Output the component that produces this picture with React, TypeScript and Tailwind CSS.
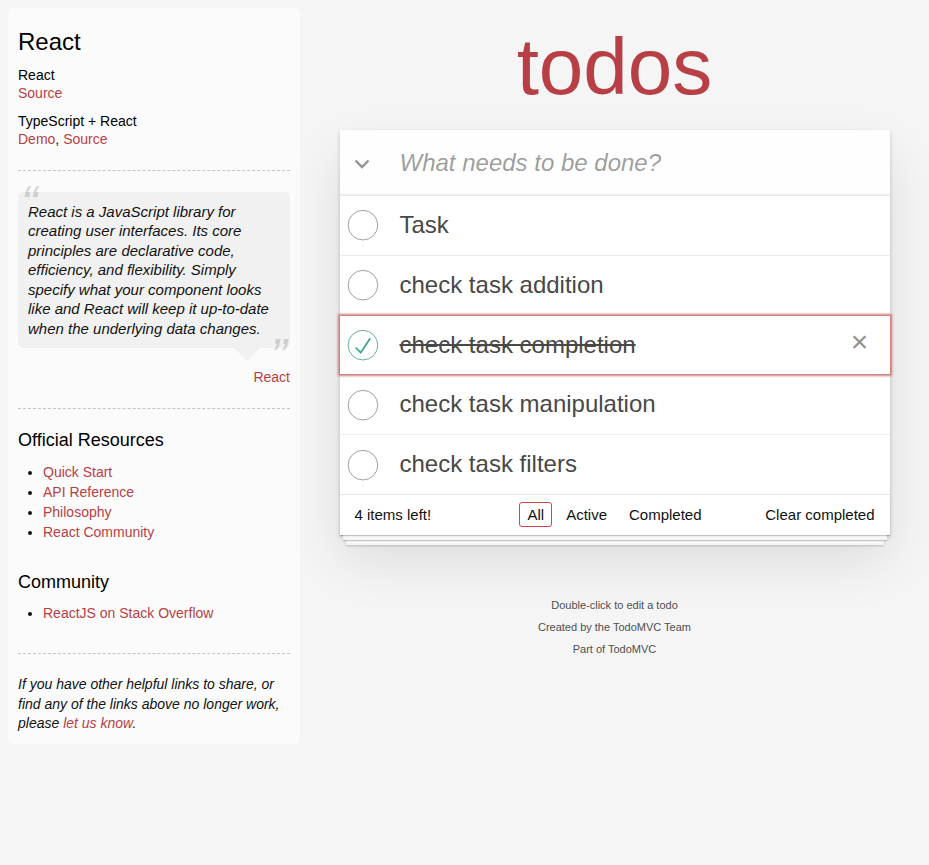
import React from "react";

const todos = [
  { title: "Task", done: false },
  { title: "check task addition", done: false },
  { title: "check task completion", done: true, focused: true },
  { title: "check task manipulation", done: false },
  { title: "check task filters", done: false },
];

function Toggle({ done }: { done: boolean }) {
  return (
    <svg width="40" height="40" viewBox="-10 -18 100 135" className="shrink-0">
      <circle
        cx="50"
        cy="50"
        r="50"
        fill="none"
        stroke={done ? "#59A193" : "#949494"}
        strokeWidth="3"
      />
      {done && <path fill="#3EA390" d="M72 25L42 71 27 56l-4 4 20 20 34-52z" />}
    </svg>
  );
}

function Rule({ className = "" }: { className?: string }) {
  return (
    <div
      className={
        "h-[2px] border-t border-b border-dashed border-t-[#c5c5c5] border-b-[#f7f7f7] " +
        className
      }
    />
  );
}

function Sidebar() {
  return (
    <aside className="ml-2 mt-2 w-[292px] shrink-0 self-start rounded-[5px] bg-white/60 p-[10px] text-[14px] leading-[19.6px] text-[#111]">
      <h3 className="mt-[10px] text-[24px] font-normal leading-[1.2] text-black">React</h3>
      <h5 className="mt-[10px] text-[14px] font-normal leading-[1.2] text-black">React</h5>
      <div>
        <a className="text-[#b83f45]">Source</a>
      </div>
      <h5 className="mt-[10px] text-[14px] font-normal leading-[1.2] text-black">
        TypeScript + React
      </h5>
      <div>
        <a className="text-[#b83f45]">Demo</a>, <a className="text-[#b83f45]">Source</a>
      </div>
      <Rule className="my-5" />
      <blockquote className="relative mb-[60px] rounded-[5px] bg-black/[0.04] p-[10px]">
        <span className="absolute left-[3px] top-[-20px] text-[50px] italic leading-[1.3] opacity-15">
          “
        </span>
        <p className="text-[15px] italic leading-[1.3]">
          React is a JavaScript library for creating user interfaces. Its core principles are
          declarative code, efficiency, and flexibility. Simply specify what your component looks
          like and React will keep it up-to-date when the underlying data changes.
        </p>
        <span className="absolute bottom-[-42px] right-[3px] text-[50px] italic leading-[1.3] opacity-15">
          ”
        </span>
        <span className="absolute right-[30px] top-full h-0 w-0 border-[13px] border-transparent border-t-black/[0.04]" />
        <div className="absolute bottom-[-40px] right-0">
          <a className="ml-[5px] text-[#b83f45]">React</a>
        </div>
      </blockquote>
      <Rule className="mb-5" />
      <h4 className="mb-[10px] text-[18px] font-normal leading-[1.2] text-black">Official Resources</h4>
      <ul className="mb-[30px] ml-[25px] list-disc">
        {["Quick Start", "API Reference", "Philosophy", "React Community"].map((t) => (
          <li key={t} className="leading-[20px]">
            <a className="text-[#b83f45]">{t}</a>
          </li>
        ))}
      </ul>
      <h4 className="mb-[10px] text-[18px] font-normal leading-[1.2] text-black">Community</h4>
      <ul className="mb-[30px] ml-[25px] list-disc">
        <li className="leading-[20px]">
          <a className="text-[#b83f45]">ReactJS on Stack Overflow</a>
        </li>
      </ul>
      <Rule className="mb-5" />
      <p className="text-[14px] italic leading-[19.6px]">
        If you have other helpful links to share, or find any of the links above no longer work,
        please <a className="text-[#b83f45]">let us know</a>.
      </p>
    </aside>
  );
}

function TodoApp() {
  return (
    <div className="mx-auto w-[550px] pt-[27px]">
      <h1 className="mb-[23px] h-[80px] text-center text-[80px] font-normal leading-[80px] text-[#b83f45]">
        todos
      </h1>
      <section className="relative bg-white shadow-[0_2px_4px_0_rgba(0,0,0,0.2),0_25px_50px_0_rgba(0,0,0,0.1)]">
        <header className="flex h-[65px] bg-black/[0.003] shadow-[inset_0_-2px_1px_rgba(0,0,0,0.03)]">
          <div className="flex h-[65px] w-[45px] shrink-0 items-center justify-center pt-[3px]">
            <svg width="16" height="10" viewBox="0 0 16 10">
              <polyline
                points="1.5,1.5 8,8 14.5,1.5"
                fill="none"
                stroke="#949494"
                strokeWidth="2.4"
              />
            </svg>
          </div>
          <input
            className="h-[65px] min-w-0 flex-1 bg-transparent py-4 pl-[15px] pr-4 text-[24px] leading-[33.6px] text-[#484848] outline-none placeholder:italic placeholder:text-black/40"
            placeholder="What needs to be done?"
          />
        </header>
        <main className="border-t border-[#e6e6e6]">
          <ul>
            {todos.map((t, i) => (
              <li
                key={t.title}
                className={i < todos.length - 1 ? "border-b border-[#ededed]" : ""}
              >
                <div
                  className={
                    "relative flex items-center " +
                    (t.focused ? "z-10 shadow-[0_0_2px_2px_#CF7D7D]" : "")
                  }
                >
                  <Toggle done={t.done} />
                  <label
                    className={
                      "block flex-1 py-[15px] pl-[20px] pr-[15px] text-[24px] leading-[1.2] text-[#484848] " +
                      (t.done ? "line-through" : "")
                    }
                  >
                    {t.title}
                  </label>
                  {t.focused && (
                    <button className="mr-[10px] h-[40px] w-[40px] pb-[6px] text-center text-[30px] leading-[1.1] text-[#949494]">
                      ×
                    </button>
                  )}
                </div>
              </li>
            ))}
          </ul>
        </main>
        <footer className="relative h-[41px] border-t border-[#e6e6e6] px-[15px] py-[10px] text-[15px] leading-[20px] text-[#111]">
          <div className="pointer-events-none absolute inset-x-0 bottom-0 h-[50px] shadow-[0_1px_1px_rgba(0,0,0,0.2),0_8px_0_-3px_#f6f6f6,0_9px_1px_-3px_rgba(0,0,0,0.2),0_16px_0_-6px_#f6f6f6,0_17px_2px_-6px_rgba(0,0,0,0.2)]" />
          <div className="relative grid grid-cols-[1fr_auto_1fr] items-center">
            <span className="justify-self-start">4 items left!</span>
            <ul className="whitespace-nowrap">
              <li className="inline">
                <a className="m-[3px] rounded-[3px] border border-[#CE4646] px-[7px] py-[3px]">All</a>
              </li>
              <li className="inline">
                <a className="m-[3px] rounded-[3px] border border-transparent px-[7px] py-[3px]">Active</a>
              </li>
              <li className="inline">
                <a className="m-[3px] rounded-[3px] border border-transparent px-[7px] py-[3px]">
                  Completed
                </a>
              </li>
            </ul>
            <button className="justify-self-end leading-[19px]">Clear completed</button>
          </div>
        </footer>
      </section>
      <footer className="mt-[65px] flex flex-col gap-[11px] text-center text-[11px] leading-none text-[#4d4d4d] [text-shadow:0_1px_0_rgba(255,255,255,0.5)]">
        <p>Double-click to edit a todo</p>
        <p>
          Created by the <a>TodoMVC Team</a>
        </p>
        <p>
          Part of <a>TodoMVC</a>
        </p>
      </footer>
    </div>
  );
}

export default function App() {
  return (
    <div className="flex min-h-screen bg-[#f5f5f5] font-['Liberation_Sans',Arial,sans-serif] text-[#111]">
      <Sidebar />
      <div className="min-w-0 flex-1">
        <TodoApp />
      </div>
    </div>
  );
}
